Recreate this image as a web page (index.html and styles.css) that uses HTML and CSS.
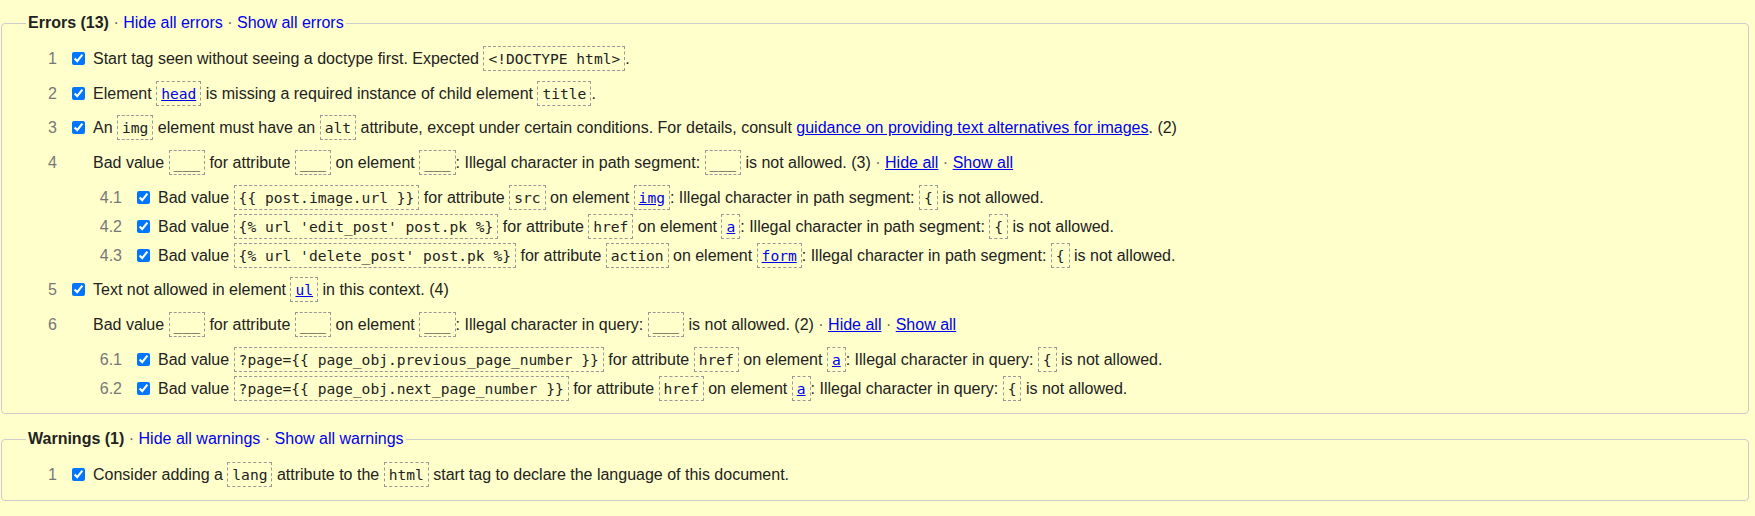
FILE: index.html
```html
<!DOCTYPE html>
<html lang="en">
<head>
<meta charset="utf-8">
<title>Check results</title>
<link rel="stylesheet" href="styles.css">
</head>
<body>
<fieldset class="group">
  <legend class="group-title"><strong>Errors (13)</strong> <span class="sep">·</span> <a class="plain" href="#">Hide all errors</a> <span class="sep">·</span> <a class="plain" href="#">Show all errors</a></legend>
  <ul class="msgs">
    <li><div class="row"><span class="num">1</span><input class="chk" type="checkbox" checked><span class="text">Start tag seen without seeing a doctype first. Expected <code>&lt;!DOCTYPE html&gt;</code>.</span></div></li>
    <li><div class="row"><span class="num">2</span><input class="chk" type="checkbox" checked><span class="text">Element <code><a href="#">head</a></code> is missing a required instance of child element <code>title</code>.</span></div></li>
    <li><div class="row"><span class="num">3</span><input class="chk" type="checkbox" checked><span class="text">An <code>img</code> element must have an <code>alt</code> attribute, except under certain conditions. For details, consult <a href="#">guidance on providing text alternatives for images</a>. (2)</span></div></li>
    <li><div class="row"><span class="num">4</span><span class="nochk"></span><span class="text">Bad value <code>___</code> for attribute <code>___</code> on element <code>___</code>: Illegal character in path segment: <code>___</code> is not allowed. (3) <span class="sep">·</span> <a href="#">Hide all</a> <span class="sep">·</span> <a href="#">Show all</a></span></div>
      <ul class="sub">
        <li><div class="row"><span class="num">4.1</span><input class="chk" type="checkbox" checked><span class="text">Bad value <code>{{ post.image.url }}</code> for attribute <code>src</code> on element <code><a href="#">img</a></code>: Illegal character in path segment: <code>{</code> is not allowed.</span></div></li>
        <li><div class="row"><span class="num">4.2</span><input class="chk" type="checkbox" checked><span class="text">Bad value <code>{% url 'edit_post' post.pk %}</code> for attribute <code>href</code> on element <code><a href="#">a</a></code>: Illegal character in path segment: <code>{</code> is not allowed.</span></div></li>
        <li><div class="row"><span class="num">4.3</span><input class="chk" type="checkbox" checked><span class="text">Bad value <code>{% url 'delete_post' post.pk %}</code> for attribute <code>action</code> on element <code><a href="#">form</a></code>: Illegal character in path segment: <code>{</code> is not allowed.</span></div></li>
      </ul>
    </li>
    <li><div class="row"><span class="num">5</span><input class="chk" type="checkbox" checked><span class="text">Text not allowed in element <code><a href="#">ul</a></code> in this context. (4)</span></div></li>
    <li><div class="row"><span class="num">6</span><span class="nochk"></span><span class="text">Bad value <code>___</code> for attribute <code>___</code> on element <code>___</code>: Illegal character in query: <code>___</code> is not allowed. (2) <span class="sep">·</span> <a href="#">Hide all</a> <span class="sep">·</span> <a href="#">Show all</a></span></div>
      <ul class="sub">
        <li><div class="row"><span class="num">6.1</span><input class="chk" type="checkbox" checked><span class="text">Bad value <code>?page={{ page_obj.previous_page_number }}</code> for attribute <code>href</code> on element <code><a href="#">a</a></code>: Illegal character in query: <code>{</code> is not allowed.</span></div></li>
        <li><div class="row"><span class="num">6.2</span><input class="chk" type="checkbox" checked><span class="text">Bad value <code>?page={{ page_obj.next_page_number }}</code> for attribute <code>href</code> on element <code><a href="#">a</a></code>: Illegal character in query: <code>{</code> is not allowed.</span></div></li>
      </ul>
    </li>
  </ul>
</fieldset>
<fieldset class="group">
  <legend class="group-title"><strong>Warnings (1)</strong> <span class="sep">·</span> <a class="plain" href="#">Hide all warnings</a> <span class="sep">·</span> <a class="plain" href="#">Show all warnings</a></legend>
  <ul class="msgs">
    <li><div class="row"><span class="num">1</span><input class="chk" type="checkbox" checked><span class="text">Consider adding a <code>lang</code> attribute to the <code>html</code> start tag to declare the language of this document.</span></div></li>
  </ul>
</fieldset>
</body>
</html>
```
FILE: styles.css
```css
html, body {
  background: #ffffcc;
}
body {
  margin: 0;
  padding: 14px 6px 0 1px;
  font-family: "Liberation Sans", Arial, sans-serif;
  font-size: 16px;
  color: #222;
}
.group {
  margin: 0 0 16px 0;
  padding: 14px 24px 12.5px 24px;
  border: 1px solid #cccccc;
  border-radius: 4px;
  min-width: 0;
}
.group-title {
  padding: 0 2px;
  line-height: 18px;
  color: #666;
}
.group-title strong {
  color: #222;
  font-weight: bold;
}
.sep {
  color: #666;
}
a {
  color: #0000ee;
}
a.plain {
  text-decoration: none;
}
.msgs, .sub {
  list-style: none;
  margin: 0;
  padding: 0;
  display: flex;
  flex-direction: column;
}
.msgs {
  gap: 9.5px;
}
.sub {
  margin-top: 10px;
  padding-left: 65px;
  gap: 4px;
}
.row {
  display: flex;
  align-items: center;
  min-height: 25px;
  line-height: 25px;
}
.num {
  width: 31px;
  flex: none;
  text-align: right;
  color: #777;
}
.chk {
  flex: none;
  width: 13px;
  height: 13px;
  margin: 0 8px 0 15px;
}
.nochk {
  flex: none;
  width: 13px;
  margin: 0 8px 0 15px;
}
.text {
  white-space: nowrap;
}
code {
  display: inline-block;
  font-family: "DejaVu Sans Mono", monospace;
  font-size: 14.6px;
  line-height: 19px;
  padding: 2px 4px 2px 4px;
  border: 1px dashed #999;
  color: #222;
  white-space: pre;
}
code a {
  color: #0000ee;
}
```
